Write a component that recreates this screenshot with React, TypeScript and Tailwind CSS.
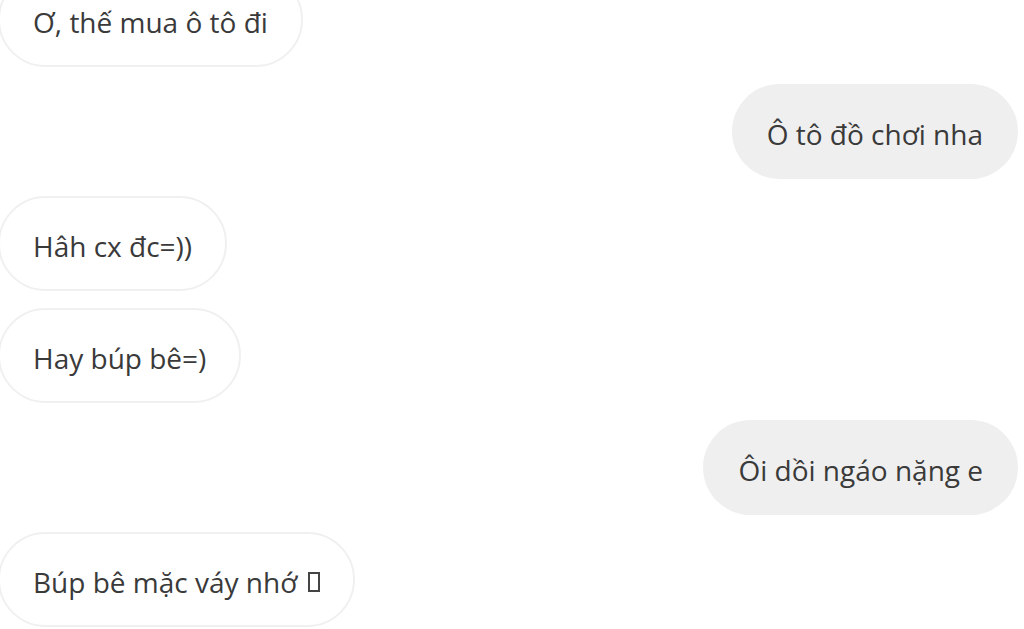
const messages: { text: string; mine: boolean; tofu?: boolean }[] = [
  { text: "Ơ, thế mua ô tô đi", mine: false },
  { text: "Ô tô đồ chơi nha", mine: true },
  { text: "Hâh cx đc=))", mine: false },
  { text: "Hay búp bê=)", mine: false },
  { text: "Ôi dồi ngáo nặng e", mine: true },
  { text: "Búp bê mặc váy nhớ", mine: false, tofu: true },
];

function Bubble({ text, mine, tofu }: { text: string; mine: boolean; tofu?: boolean }) {
  return (
    <div className={mine ? "flex justify-end pr-[6px]" : "flex justify-start -ml-[2px]"}>
      <div
        className={
          mine
            ? "flex h-[95px] items-center rounded-full bg-[#efefef] px-[35px] pt-[4px] text-[28px] leading-none text-[#3a3a3a]"
            : "flex h-[95px] items-center rounded-full border-2 border-[#f0f0f0] bg-white px-[33px] pt-[4px] text-[28px] leading-none text-[#3a3a3a]"
        }
      >
        <span>{text}</span>
        {/* emoji that didn't render -> tofu box */}
        {tofu && (
          <span className="ml-[11px] inline-block h-[20px] w-[12px] border-2 border-[#444]" />
        )}
      </div>
    </div>
  );
}

export default function App() {
  return (
    <main
      className="h-[629px] w-[1024px] overflow-hidden bg-white"
      style={{ fontFamily: '"Open Sans", "Noto Sans", sans-serif' }}
    >
      <div className="-mt-[28px] flex flex-col gap-[17px]">
        {messages.map((m, i) => (
          <Bubble key={i} {...m} />
        ))}
      </div>
    </main>
  );
}
